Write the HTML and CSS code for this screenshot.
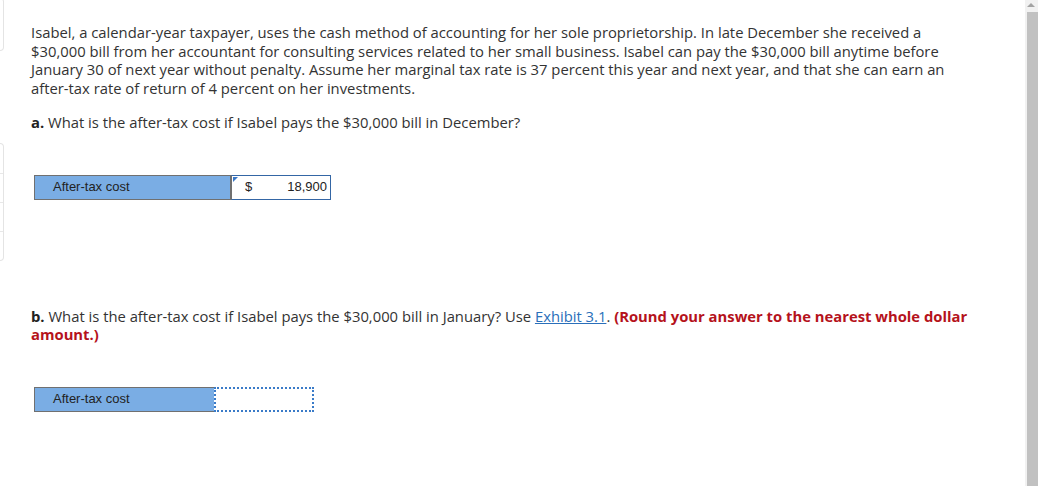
FILE: index.html
```html
<!DOCTYPE html>
<html lang="en">
<head>
<meta charset="utf-8">
<title>Question</title>
<link rel="stylesheet" href="styles.css">
</head>
<body>
<div class="page">
  <div class="side">
    <div class="side-box top"></div>
    <div class="side-box group">
      <div class="side-row"></div>
      <div class="side-row"></div>
      <div class="side-row"></div>
      <div class="side-row"></div>
    </div>
  </div>
  <main class="content">
    <p class="intro">Isabel, a calendar-year taxpayer, uses the cash method of accounting for her sole proprietorship. In late December she received a<br>$30,000 bill from her accountant for consulting services related to her small business. Isabel can pay the $30,000 bill anytime before<br>January 30 of next year without penalty. Assume her marginal tax rate is 37 percent this year and next year, and that she can earn an<br>after-tax rate of return of 4 percent on her investments.</p>
    <p class="question"><b>a.</b> What is the after-tax cost if Isabel pays the $30,000 bill in December?</p>
    <div class="answer answer-a">
      <div class="label">After-tax cost</div>
      <div class="field filled"><span class="corner"></span><span class="cur">$</span><span class="val">18,900</span></div>
    </div>
    <p class="question q-b"><b>b.</b> What is the after-tax cost if Isabel pays the $30,000 bill in January? Use <a class="link" href="#">Exhibit 3.1</a>. <strong class="hint">(Round your answer to the nearest whole dollar<br>amount.)</strong></p>
    <div class="answer answer-b">
      <div class="label label-b">After-tax cost</div>
      <div class="field empty"></div>
    </div>
  </main>
  <div class="scrollbar">
    <div class="arrow"></div>
    <div class="thumb"></div>
  </div>
</div>
</body>
</html>
```
FILE: styles.css
```css
html, body {
  margin: 0;
  padding: 0;
  background: #fff;
  height: 100%;
  overflow: hidden;
}
*, *::before, *::after { box-sizing: border-box; }
.page {
  display: flex;
  height: 486px;
}
.side {
  width: 4px;
  flex: none;
  display: flex;
  flex-direction: column;
}
.side-box {
  border: 1px solid #e4e4e4;
  border-left: none;
  border-radius: 0 4px 4px 0;
}
.side-box.top {
  height: 53px;
  margin-top: -2px;
}
.side-box.group {
  margin-top: 92px;
  display: flex;
  flex-direction: column;
}
.side-row {
  height: 29px;
  border-top: 1px solid #e8e8e8;
}
.side-row:first-child { border-top: none; }
.content {
  flex: 1;
  padding: 23px 0 0 27px;
  font-family: "Open Sans", Lato, sans-serif;
  font-size: 14.8px;
  line-height: 18.5px;
  color: #333;
  white-space: nowrap;
}
.content p { margin: 0; }
.question { margin-top: 16px !important; }
.question b { font-weight: 700; color: #222; }
.answer {
  display: flex;
  height: 25px;
  margin-left: 3px;
  font-family: "Liberation Sans", Arial, sans-serif;
  font-size: 13px;
  color: #222;
}
.answer-a { margin-top: 43px; }
.label {
  width: 197px;
  background: #7aade4;
  border: 1px solid #707070;
  padding-left: 18px;
  display: flex;
  align-items: center;
}
.field {
  position: relative;
  width: 100px;
  background: #fff;
  display: flex;
  align-items: center;
}
.filled {
  border: 1px solid #3466a5;
  border-left-color: #707070;
  padding: 0 3px 0 13px;
  justify-content: space-between;
}
.corner {
  position: absolute;
  left: 1px;
  top: 1px;
  width: 0;
  height: 0;
  border-top: 5px solid #3a78c8;
  border-right: 5px solid transparent;
}
.q-b { margin-top: 107px !important; }
.link { color: #2a6fba; text-decoration: underline; }
.hint { color: #b5121b; font-weight: 700; }
.answer-b { margin-top: 43px; }
.label-b { width: 180px; border-right: none; }
.empty {
  width: 100px;
  height: 25px;
  border: 2px dotted #3a7bc8;
}
.scrollbar {
  width: 13px;
  flex: none;
  background: #f1f1f1;
  display: flex;
  flex-direction: column;
  align-items: flex-end;
}
.arrow {
  width: 0;
  height: 0;
  margin: 3px 3px 0 0;
  border-left: 4px solid transparent;
  border-right: 4px solid transparent;
  border-bottom: 4px solid #a3a3a3;
}
.thumb {
  margin-top: 5px;
  width: 11px;
  flex: 1;
  background: #c1c1c1;
}
```
